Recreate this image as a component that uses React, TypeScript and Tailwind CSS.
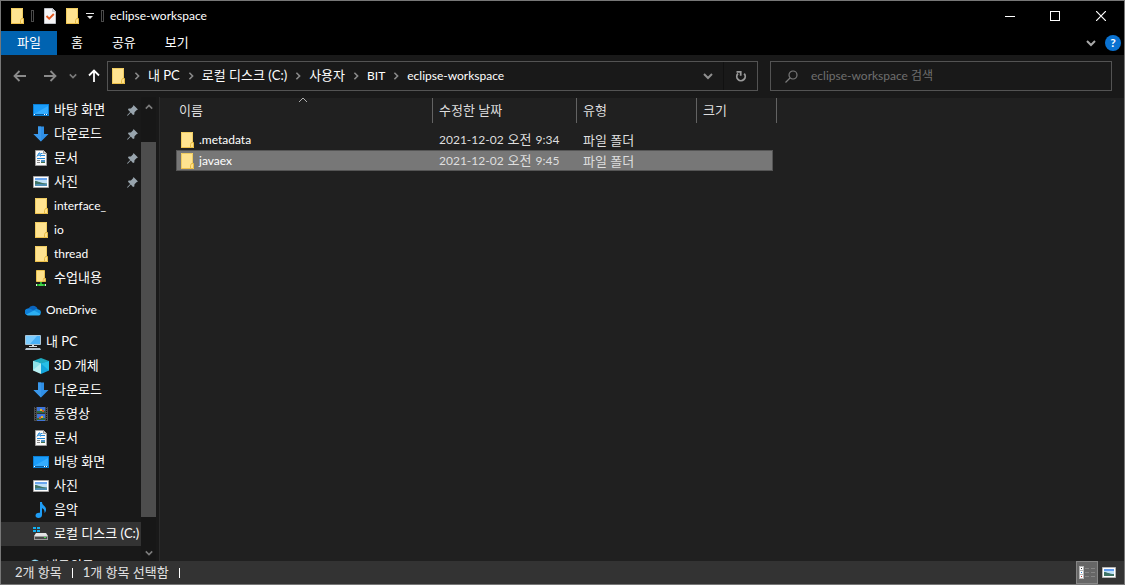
import React, { useState } from 'react';

type IconType = React.FC<{ className?: string }>;

const FolderIcon: IconType = ({ className = '' }) => (
    <svg className={`shrink-0 ${className}`} width="16" height="16" viewBox="0 0 16 16" aria-hidden="true">
        <path d="M2 0h12v11h1v5H2z" fill="#ffe390" />
        <path d="M2.500 15.500V.5h11v10" fill="none" stroke="#f0cc60" />
        <path d="M2 15h10v1H2z" fill="#eec04a" />
        <path d="M12.500 10.500h2v5h-3v-3z" fill="#ffe08a" stroke="#e6bb42" />
    </svg>
);

const NetFolderIcon: IconType = () => (
    <svg className="shrink-0" width="16" height="16" viewBox="0 0 16 16" aria-hidden="true">
        <path d="M3.5.5h8v8h1v3h-9z" fill="#ffe28b" stroke="#ecc450" />
        <path d="M10.5 8.5h1.5v3h-2z" fill="#ffe9a8" stroke="#e0b23a" strokeWidth=".8" />
        <path d="M7 12h2v2H7zM3 14h10v2H3z" fill="#22b02c" />
        <path d="M3 14h1v2H3zM12 14h1v2h-1z" fill="#d8f0d8" />
        <path d="M6 14h4v2H6z" fill="#45cf4b" />
    </svg>
);

const DesktopIcon: IconType = () => (
    <svg className="shrink-0" width="16" height="16" viewBox="0 0 16 16" aria-hidden="true">
        <path d="M0 2h16v12H0z" fill="#0b7fd4" />
        <path d="M1 3h14v9H1z" fill="#1b9dfa" />
        <path d="M1 12 15 4v8z" fill="#35adff" />
        <path d="M1 12h14v1H1z" fill="#075a9c" />
        <path d="M1 12h1v1H1zM11 12h1v1h-1zM13 12h1v1h-1z" fill="#fff" />
    </svg>
);

const DownloadIcon: IconType = () => (
    <svg className="shrink-0" width="16" height="16" viewBox="0 0 16 16" aria-hidden="true">
        <path d="M5 .5h6V8h4.5L8 15.5.5 8H5z" fill="#2f8fe6" />
        <path d="M5 .5h3v15L.5 8H5z" fill="#3b98ea" />
    </svg>
);

const DocumentIcon: IconType = () => (
    <svg className="shrink-0" width="16" height="16" viewBox="0 0 16 16" aria-hidden="true">
        <path d="M2.5.5h8l3 3v12h-11z" fill="#fafafa" stroke="#9b9b9b" />
        <path d="M10.5.5v3h3" fill="#d5d5d5" stroke="#9b9b9b" />
        <path d="M4 6.5 6 3h1l.5 3.5M5 5.2h2M8 3.5h1.500M8 5.500h4M4 8.500h8" fill="none" stroke="#1e86d8" />
        <path d="M4 10.500h3M4 12.500h3" stroke="#888" />
        <path d="M8 10h4v3H8z" fill="#4b8fc4" />
        <path d="M8 12h4v1H8z" fill="#40704a" />
    </svg>
);

const PictureIcon: IconType = () => (
    <svg className="shrink-0" width="16" height="16" viewBox="0 0 16 16" aria-hidden="true">
        <path d="M.5 2.500h15v11H.5z" fill="#fff" stroke="#a5a5a5" />
        <path d="M2 4h12v8H2z" fill="#bfe0f7" />
        <path d="M2 4h12v2H2z" fill="#6ba6ee" />
        <path d="M2 7c3 0 5 2 12 2.500V12H2z" fill="#3f7466" />
        <path d="M2 10.500c4-1 8 0 12-.5v2H2z" fill="#4d8eb5" />
    </svg>
);

const CloudIcon: IconType = () => (
    <svg className="shrink-0" width="16" height="16" viewBox="0 0 16 16" aria-hidden="true">
        <path d="M3.500 6.500A5 5 0 0 1 12.600 7L8 11l-6 2A3.500 3.500 0 0 1 3.500 6.500z" fill="#0a64bd" />
        <path d="M3.300 6.500c3 0 4.500 1.500 6 2.500L3 13.300A3.400 3.400 0 0 1 3.300 6.500z" fill="#0f7fd8" />
        <path d="M8.500 8.500c1.500-1.800 4-2 5-1 2.500.5 3 3 2 4.500l-3 .5z" fill="#1492df" />
        <path d="M1.200 12.500 9 8.600l6.600 3.400c-.5 1-1.400 1.500-2.600 1.500H3.500c-1 0-1.800-.4-2.300-1z" fill="#2caff2" />
    </svg>
);

const ComputerIcon: IconType = () => (
    <svg className="shrink-0" width="16" height="16" viewBox="0 0 16 16" aria-hidden="true">
        <path d="M.5 1.500h15v9H.5z" fill="#48b0f8" stroke="#a9c5d8" />
        <path d="M1 2h11L5 10H1z" fill="#7cccff" />
        <path d="M7 11h2v1H7zM4 12h8v1H4z" fill="#d6dde2" />
        <path d="M1 14h14l1 2H0z" fill="#b5c4d0" />
    </svg>
);

const CubeIcon: IconType = () => (
    <svg className="shrink-0" width="16" height="16" viewBox="0 0 16 16" aria-hidden="true">
        <path d="m8 0 8 3-8 3-8-3z" fill="#1ea9bf" />
        <path d="M0 3 8 5.500V16l-8-3.500z" fill="#b9f1f3" />
        <path d="M0 3 8 5.500 0 12z" fill="#8ee4ea" />
        <path d="M16 3 8 5.500V16l8-3.500z" fill="#13a5dc" />
        <path d="M8 5.500 16 3v9.500z" fill="#26bfe6" />
    </svg>
);

const VideoIcon: IconType = () => (
    <svg className="shrink-0" width="16" height="16" viewBox="0 0 16 16" aria-hidden="true">
        <path d="M1 1h14v14H1z" fill="#4c4c4c" />
        <path d="M4 1h8v14H4z" fill="#3f74d6" />
        <path d="M4 5h8v2H4zM4 12h8v2H4z" fill="#2c6a42" />
        <path d="M7 3h2v2H7zM8 10h2v2H8z" fill="#e8b52b" />
        <path d="M9 4h2v2H9zM6 11h2v2H6z" fill="#c5562c" />
        <path d="M4 7.500h8" stroke="#333" />
        <path d="M2.500 1v14M13.500 1v14" stroke="#151515" strokeDasharray="1 1" />
    </svg>
);

const MusicIcon: IconType = () => (
    <svg className="shrink-0" width="16" height="16" viewBox="0 0 16 16" aria-hidden="true">
        <path d="M7 0h2c0 3.500 4 4 4 7.500 0 1.800-.8 3-1.500 3.500.4-2.500-.7-4-2.500-5v7c0 2-1.500 3-3.500 3S2.500 15 2.500 13.500 4 10.500 7 10.800z" fill="#1f9df5" />
    </svg>
);

const DriveIcon: IconType = () => (
    <svg className="shrink-0" width="16" height="16" viewBox="0 0 16 16" aria-hidden="true">
        <path d="M0 1h3v2H0zM4 1h3v2H4zM0 4h3v2H0zM4 4h3v2H4z" fill="#12b0f2" />
        <path d="M3 7h10l2 3H1z" fill="#e4e4e4" />
        <path d="M1 10h14v4H1z" fill="#9a9a9a" />
        <path d="M2 11h12v2H2z" fill="#4a4a4a" />
        <path d="M11 11h2v1h-2z" fill="#3ee04c" />
    </svg>
);

const NetworkIcon: IconType = () => (
    <svg className="shrink-0" width="16" height="16" viewBox="0 0 16 16" aria-hidden="true">
        <circle cx="10" cy="7" r="5.500" fill="#6fc3e8" />
        <path d="M7 3.500c2-1.500 4-1 5 0l-2 3-2 .5z" fill="#d9f2e0" />
        <path d="M0 8h10v6H0z" fill="#3ba7ee" />
    </svg>
);

const PinIcon: IconType = () => (
    <svg className="shrink-0" width="11" height="11" viewBox="0 0 11 11" aria-hidden="true">
        <path d="M6.500 0 11 4.500l-1.200.4L7.500 7.200 7.300 9.500 6 10 3.800 7.500.7 10.800 0 10.300 3.200 7 1 4.800l.6-1.200 2.300-.2L6.100 1.200z" fill="#98a4ad" />
    </svg>
);

const TaskIcon: IconType = () => (
    <svg className="shrink-0" width="12" height="16" viewBox="0 0 12 16" aria-hidden="true">
        <path d="M.5.5h8l3 3v12H.5z" fill="#f4f4f6" stroke="#bfc2c8" />
        <path d="M8.500.5v3h3" fill="#d4d6da" stroke="#bfc2c8" />
        <path d="m2.500 8 2.700 2.700L9.800 6" fill="none" stroke="#e2571f" strokeWidth="1.800" />
    </svg>
);

const Chevron: React.FC<{ d: 'up' | 'down' | 'right'; className?: string; width?: number; size?: number }> = ({ d, className = '', width = 2, size = 10 }) => {
    const paths = { up: 'M1 7l4-4 4 4', down: 'M1 3l4 4 4-4', right: 'M3 1l4 4-4 4' };
    return (
        <svg className={`shrink-0 ${className}`} width={size} height={size} viewBox="0 0 10 10" fill="none" stroke="currentColor" strokeWidth={width} aria-hidden="true">
            <path d={paths[d]} />
        </svg>
    );
};

const Arrow: React.FC<{ className: string }> = ({ className }) => (
    <svg className={className} width="14" height="14" viewBox="0 0 14 14" fill="none" stroke="currentColor" strokeWidth="1.800" aria-hidden="true">
        <path d="M1.500 7H13M6.500 2l-5 5 5 5" />
    </svg>
);

interface TreeEntry {
    id: string;
    label: string;
    icon: IconType;
    level: 0 | 1;
    pinned?: boolean;
    latin?: boolean;
}

const treeGroups: TreeEntry[][] = [
    [
        { id: 'q-desktop', label: '바탕 화면', icon: DesktopIcon, level: 1, pinned: true },
        { id: 'q-downloads', label: '다운로드', icon: DownloadIcon, level: 1, pinned: true },
        { id: 'q-documents', label: '문서', icon: DocumentIcon, level: 1, pinned: true },
        { id: 'q-pictures', label: '사진', icon: PictureIcon, level: 1, pinned: true },
        { id: 'q-interface', label: 'interface_', icon: FolderIcon, level: 1, latin: true },
        { id: 'q-io', label: 'io', icon: FolderIcon, level: 1, latin: true },
        { id: 'q-thread', label: 'thread', icon: FolderIcon, level: 1, latin: true },
        { id: 'q-class', label: '수업내용', icon: NetFolderIcon, level: 1 },
    ],
    [{ id: 'onedrive', label: 'OneDrive', icon: CloudIcon, level: 0, latin: true }],
    [
        { id: 'pc', label: '내 PC', icon: ComputerIcon, level: 0 },
        { id: 'objects', label: '3D 개체', icon: CubeIcon, level: 1 },
        { id: 'downloads', label: '다운로드', icon: DownloadIcon, level: 1 },
        { id: 'videos', label: '동영상', icon: VideoIcon, level: 1 },
        { id: 'documents', label: '문서', icon: DocumentIcon, level: 1 },
        { id: 'desktop', label: '바탕 화면', icon: DesktopIcon, level: 1 },
        { id: 'pictures', label: '사진', icon: PictureIcon, level: 1 },
        { id: 'music', label: '음악', icon: MusicIcon, level: 1 },
        { id: 'drive-c', label: '로컬 디스크 (C:)', icon: DriveIcon, level: 1 },
    ],
    [{ id: 'network', label: '네트워크', icon: NetworkIcon, level: 0 }],
];

const crumbs = [
    { label: '내 PC', latin: false },
    { label: '로컬 디스크 (C:)', latin: false },
    { label: '사용자', latin: false },
    { label: 'BIT', latin: true },
    { label: 'eclipse-workspace', latin: true },
];

const files = [
    { name: '.metadata', date: '2021-12-02', meridiem: '오전', time: '9:34', type: '파일 폴더' },
    { name: 'javaex', date: '2021-12-02', meridiem: '오전', time: '9:45', type: '파일 폴더' },
];

const TitleBar: React.FC = () => (
    <header className="flex h-[30px] shrink-0 items-center bg-black pl-2">
        <FolderIcon />
        <span className="ml-[6px] h-3 w-[3px] border border-[#4a4a4a]" />
        <button aria-label="속성" className="ml-[10px]"><TaskIcon /></button>
        <button aria-label="새 폴더" className="ml-2"><FolderIcon /></button>
        <button aria-label="빠른 실행 도구 모음 사용자 지정" className="ml-[6px]">
            <svg width="8" height="8" viewBox="0 0 8 8" aria-hidden="true">
                <path d="M0 1h8v1H0zM1 4h6L4 7z" fill="#e8e8e8" />
            </svg>
        </button>
        <span className="ml-[7px] h-3 w-[3px] border border-[#4a4a4a]" />
        <h1 className="ml-[6px] flex-1 text-xs text-white">eclipse-workspace</h1>
        <button aria-label="최소화" className="flex h-full w-[45px] items-center justify-center">
            <span className="h-px w-[10px] bg-white" />
        </button>
        <button aria-label="최대화" className="flex h-full w-[46px] items-center justify-center">
            <span className="size-[10px] border border-white" />
        </button>
        <button aria-label="닫기" className="flex h-full w-[46px] items-center justify-center text-white">
            <svg width="10" height="10" viewBox="0 0 10 10" stroke="currentColor" strokeWidth="1.200" aria-hidden="true">
                <path d="M0 0l10 10M10 0L0 10" />
            </svg>
        </button>
    </header>
);

const Ribbon: React.FC = () => (
    <div className="flex h-6 shrink-0 items-center bg-black text-[13px] text-white">
        <button className="h-full bg-[#0063b1] px-4">파일</button>
        <button className="h-full px-[14px]">홈</button>
        <button className="h-full px-[15px]">공유</button>
        <button className="h-full px-[14px]">보기</button>
        <button aria-label="리본 확장" className="ml-auto text-[#a8a8a8]"><Chevron d="down" width={2} /></button>
        <button aria-label="도움말" className="ml-[9px] mr-[3px] flex size-4 items-center justify-center rounded-full bg-[#0a72d1] text-xs font-bold text-white">
            ?
        </button>
    </div>
);

const NavBar: React.FC = () => (
    <div className="flex h-[42px] shrink-0 items-center bg-[#191919] pr-3">
        <button aria-label="뒤로" className="ml-3"><Arrow className="text-[#8a8a8a]" /></button>
        <button aria-label="앞으로" className="ml-4"><Arrow className="rotate-180 text-[#8a8a8a]" /></button>
        <button aria-label="최근 위치" className="ml-3 text-[#7a7a7a]"><Chevron d="down" size={8} /></button>
        <button aria-label="위로" className="ml-[10px]"><Arrow className="rotate-90 text-white" /></button>
        <div className="ml-[6px] flex h-[30px] flex-1 items-center border border-[#535353] pl-[2px]">
            <FolderIcon />
            {crumbs.map(crumb => (
                <React.Fragment key={crumb.label}>
                    <Chevron d="right" size={8} className="mx-[7px] text-[#8a8a8a]" />
                    <button className={`whitespace-nowrap text-white ${crumb.latin ? 'text-xs' : 'text-[13px]'}`}>{crumb.label}</button>
                </React.Fragment>
            ))}
            <button aria-label="이전 위치" className="ml-auto mr-[10px] text-[#8f8f8f]"><Chevron d="down" /></button>
            <button aria-label="새로 고침" className="flex h-full w-[34px] items-center justify-center border-l border-[#111] text-[#9a9a9a]">
                <svg width="12" height="12" viewBox="0 0 12 12" fill="none" stroke="currentColor" strokeWidth="1.800" aria-hidden="true">
                    <path d="M3 3.500a4.200 4.200 0 1 0 6.200.2" />
                    <path d="M1.500 1.800h4.200v4" />
                </svg>
            </button>
        </div>
        <label className="ml-3 flex h-[30px] w-[342px] items-center border border-[#535353] pl-[14px]">
            <svg className="shrink-0 text-[#7a7a7a]" width="13" height="13" viewBox="0 0 13 13" fill="none" stroke="currentColor" strokeWidth="1.200" aria-hidden="true">
                <circle cx="8" cy="5" r="4" />
                <path d="M5 8 .5 12.500" />
            </svg>
            <input
                type="text"
                aria-label="eclipse-workspace 검색"
                placeholder="eclipse-workspace 검색"
                className="ml-[13px] min-w-0 flex-1 bg-transparent text-xs outline-none placeholder:text-[#6f6f6f]"
            />
        </label>
    </div>
);

const TreeItem: React.FC<{ entry: TreeEntry; isActive: boolean; onClick: () => void }> = ({ entry, isActive, onClick }) => (
    <button
        onClick={onClick}
        className={`flex h-6 w-full items-center whitespace-nowrap text-white ${entry.level === 0 ? 'pl-6' : 'pl-8'} ${isActive ? 'bg-[#333333]' : ''}`}
    >
        <entry.icon />
        <span className={`ml-[5px] ${entry.latin ? 'text-xs' : 'text-[13px]'}`}>{entry.label}</span>
        {entry.pinned && <span className="ml-auto mr-[3px]"><PinIcon /></span>}
    </button>
);

const Sidebar: React.FC = () => {
    const [active, setActive] = useState('drive-c');

    return (
        <aside className="flex w-[159px] shrink-0 border-r border-[#2b2b2b] bg-[#191919]">
            <nav className="flex w-[140px] flex-col gap-2 overflow-hidden pt-px">
                {treeGroups.map(group => (
                    <div key={group[0].id} className="shrink-0">
                        {group.map(entry => (
                            <TreeItem key={entry.id} entry={entry} isActive={active === entry.id} onClick={() => setActive(entry.id)} />
                        ))}
                    </div>
                ))}
            </nav>
            <div className="flex w-[15px] flex-col items-center bg-[#171717] text-[#7c7c7c]">
                <Chevron d="up" size={8} className="my-[6px]" />
                <span className="mt-[25px] w-full flex-1 bg-[#4d4d4d]" />
                <Chevron d="down" size={8} className="mt-8 mb-1" />
            </div>
        </aside>
    );
};

const FileList: React.FC = () => {
    const [selected, setSelected] = useState('javaex');

    return (
        <main className="min-w-0 flex-1 border-t border-[#191919] bg-[#202020] pl-4">
            <table className="w-[597px] table-fixed border-collapse text-left text-[#dedede]">
                <thead className="text-[13px]">
                    <tr className="h-[31px] align-top">
                        <th className="w-[257px] p-0 font-normal">
                            <div className="relative h-[25px] border-r border-[#636363] pl-[3px] leading-6">
                                이름
                                <Chevron d="up" width={1} className="absolute top-[-3px] left-[122px] text-[#b0b0b0]" />
                            </div>
                        </th>
                        <th className="w-36 p-0 font-normal">
                            <div className="h-[25px] border-r border-[#636363] pl-[6px] leading-6">수정한 날짜</div>
                        </th>
                        <th className="w-[120px] p-0 font-normal">
                            <div className="h-[25px] border-r border-[#636363] pl-[6px] leading-6">유형</div>
                        </th>
                        <th className="p-0 font-normal">
                            <div className="h-[25px] w-20 border-r border-[#636363] pl-[6px] leading-6">크기</div>
                        </th>
                    </tr>
                </thead>
                <tbody className="text-xs">
                    {files.map(file => (
                        <tr
                            key={file.name}
                            onClick={() => setSelected(file.name)}
                            className={`h-[21px] ${selected === file.name ? 'bg-[#777777] outline-1 -outline-offset-1 outline-[#555555]' : ''}`}
                        >
                            <td className="p-0">
                                <div className="flex items-center pl-[3px] text-white">
                                    <FolderIcon />
                                    <span className="ml-1">{file.name}</span>
                                </div>
                            </td>
                            <td className="p-0 pl-[6px]">
                                <div className="flex items-baseline gap-1 leading-4 whitespace-nowrap">
                                    <span>{file.date}</span>
                                    <span className="text-[13px]">{file.meridiem}</span>
                                    <span>{file.time}</span>
                                </div>
                            </td>
                            <td className="p-0 pl-[6px] text-[13px] leading-4">{file.type}</td>
                            <td className="p-0" />
                        </tr>
                    ))}
                </tbody>
            </table>
        </main>
    );
};

const StatusBar: React.FC = () => (
    <footer className="flex h-[23px] shrink-0 items-center bg-[#333333] pl-[14px] text-[13px] text-[#e2e2e2]">
        <span>2개 항목</span>
        <span className="mx-[10px] h-[10px] w-px bg-white" />
        <span>1개 항목 선택함</span>
        <span className="mx-[10px] h-[10px] w-px bg-white" />
        <button aria-label="자세히" className="ml-auto flex h-full w-[22px] items-center justify-center border border-[#868686] bg-[#666666]">
            <svg width="16" height="13" viewBox="0 0 16 13" aria-hidden="true">
                <path d="M0 0h5v13H0z" fill="#b8b8b8" />
                <path d="M1 1h3v3H1zM1 5h3v3H1zM1 9h3v3H1z" fill="#fff" />
                <path d="M2 2h1v1H2z" fill="#333" />
                <path d="M2 6h1v1H2z" fill="#2877c7" />
                <path d="M2 10h1v1H2z" fill="#b33" />
                <path d="M6 2h4v1H6zM12 2h4v1h-4zM6 6h4v1H6zM12 6h4v1h-4zM6 10h4v1H6zM12 10h4v1h-4z" fill="#858585" />
            </svg>
        </button>
        <button aria-label="큰 아이콘" className="mx-1">
            <svg width="14" height="11" viewBox="0 0 14 11" aria-hidden="true">
                <path d="M.5.5h13v10H.5z" fill="#fff" stroke="#b5b5b5" />
                <path d="M2 2h10v7H2z" fill="#bfe0f7" />
                <path d="M2 2h10v2H2z" fill="#5f9cf0" />
                <path d="M2 5c3 0 5 2 10 2v2H2z" fill="#3f7466" />
            </svg>
        </button>
        <span className="w-1" />
    </footer>
);

const App: React.FC = () => (
    <div className="flex h-screen flex-col overflow-hidden border border-[#777777] bg-[#191919] font-['Lato','Noto_Sans_CJK_KR',sans-serif] select-none">
        <TitleBar />
        <Ribbon />
        <NavBar />
        <div className="flex min-h-0 flex-1">
            <Sidebar />
            <FileList />
        </div>
        <StatusBar />
    </div>
);

export default App;
